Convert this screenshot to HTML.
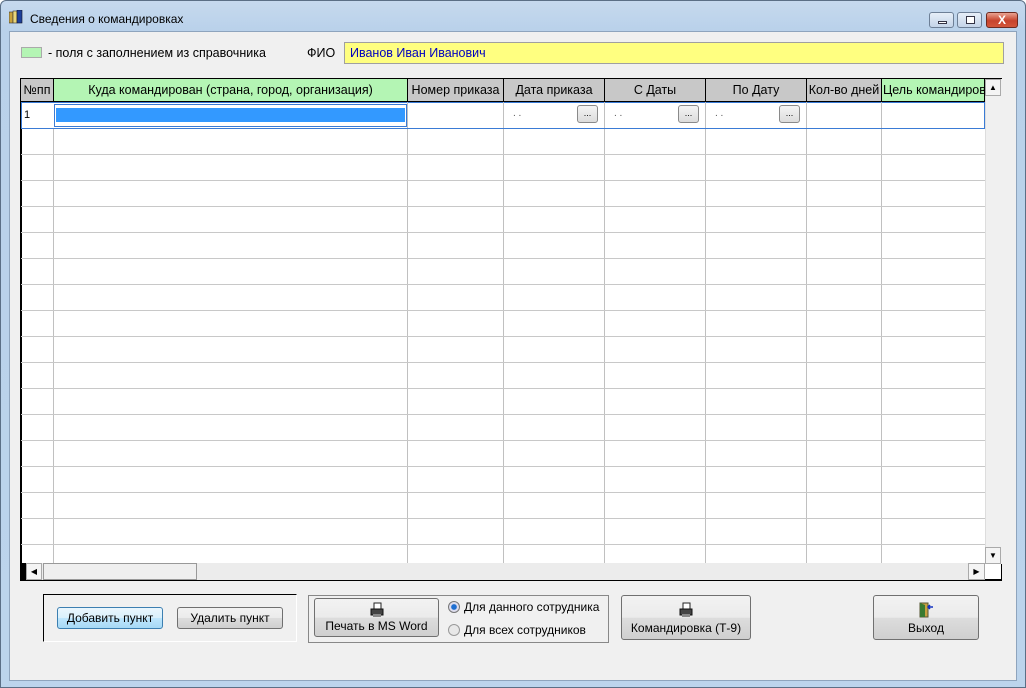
<!DOCTYPE html>
<html><head><meta charset="utf-8"><style>
*{margin:0;padding:0;box-sizing:border-box}
body{width:1026px;height:688px;overflow:hidden;background:#fff;font-family:"Liberation Sans","DejaVu Sans",sans-serif;font-size:12px;position:relative}
.a{position:absolute}
.btn{position:absolute;border:1px solid #707070;border-radius:3px;background:linear-gradient(#f2f2f2 0%,#ebebeb 50%,#dddddd 51%,#cfcfcf 100%);text-align:center;color:#000;font-size:12px}
.hd{position:absolute;top:79px;height:23px;border-right:1px solid #000;border-bottom:1px solid #000;background:#c8c8c8;text-align:center;line-height:23px;font-size:12.5px;white-space:nowrap;overflow:hidden}
.g{background:#b4f5b4}
.vl{position:absolute;top:102px;width:1px;height:461px;background:#c0c0c0}
.hl{position:absolute;left:21px;width:964px;height:1px;background:#c8c8c8}
.dd{position:absolute;top:105px;width:21px;height:18px;border:1px solid #8a8a8a;border-radius:3px;background:linear-gradient(#f4f4f4,#dcdcdc);font-size:9px;text-align:center;line-height:14px}
.dots{position:absolute;top:108px;font-size:10px;color:#555}
.ic{display:block;margin:0 auto}
</style></head><body>
<div class="a" style="left:0;top:0;width:1026px;height:688px;background:linear-gradient(#c6d9ee,#b9d1ea 30px,#bcd4ec);border:1px solid #5b6f86;border-radius:6px 6px 0 0"></div>
<div class="a" style="left:9px;top:31px;width:1008px;height:650px;background:#f0f0f0;border:1px solid #8ea4bd"></div>
<div class="a" style="left:9px;top:10px;width:14px;height:14px">
<svg width="14" height="14"><rect x="0" y="2" width="4" height="11" fill="#c9a23a" stroke="#333" stroke-width=".6"/><rect x="4" y="1" width="4" height="12" fill="#e8d57a" stroke="#333" stroke-width=".6"/><rect x="8" y="0" width="5" height="13" fill="#1d3f9a" stroke="#112" stroke-width=".6"/></svg></div>
<div class="a" style="left:30px;top:12px;font-size:12px;color:#000">Сведения о командировках</div>
<div class="a" style="left:929px;top:12px;width:25px;height:16px;border:1px solid #6d7f96;border-radius:3px;background:linear-gradient(#e6eef8,#c4d4e8)"><div class="a" style="left:8px;top:8px;width:9px;height:3px;background:#fff;border:1px solid #334"></div></div>
<div class="a" style="left:957px;top:12px;width:25px;height:16px;border:1px solid #6d7f96;border-radius:3px;background:linear-gradient(#e6eef8,#c4d4e8)"><div class="a" style="left:8px;top:3px;width:9px;height:8px;border:1px solid #334;background:#fff"></div></div>
<div class="a" style="left:986px;top:12px;width:32px;height:16px;border:1px solid #6d2a20;border-radius:3px;background:linear-gradient(#e9a392,#c7432c 55%,#d2563a);color:#fff;font-weight:bold;font-size:12px;text-align:center;line-height:14px">X</div>
<div class="a" style="left:21px;top:47px;width:21px;height:11px;background:#b4f5b4;border:1px solid #aaa"></div>
<div class="a" style="left:48px;top:46px;font-size:12.5px">- поля с заполнением из справочника</div>
<div class="a" style="left:307px;top:46px;font-size:12.5px">ФИО</div>
<div class="a" style="left:344px;top:42px;width:660px;height:22px;background:#ffff80;border:1px solid #a0a0a0;color:#0000c0;padding-left:5px;line-height:20px;font-size:12.5px">Иванов Иван Иванович</div>
<div class="a" style="left:20px;top:78px;width:982px;height:503px;background:#fff;border:2px solid #000;border-right:1px solid #000;border-top:1px solid #000"></div>
<div class="hd" style="left:21px;width:33px">№пп</div>
<div class="hd g" style="left:54px;width:354px">Куда командирован (страна, город, организация)</div>
<div class="hd" style="left:408px;width:96px">Номер приказа</div>
<div class="hd" style="left:504px;width:101px">Дата приказа</div>
<div class="hd" style="left:605px;width:101px">С Даты</div>
<div class="hd" style="left:706px;width:101px">По Дату</div>
<div class="hd" style="left:807px;width:75px">Кол-во дней</div>
<div class="hd g" style="left:882px;width:103px;text-align:left;padding-left:1px">Цель командировки</div>
<div class="vl" style="left:53px"></div><div class="vl" style="left:407px"></div><div class="vl" style="left:503px"></div><div class="vl" style="left:604px"></div><div class="vl" style="left:705px"></div><div class="vl" style="left:806px"></div><div class="vl" style="left:881px"></div>
<div class="hl" style="top:154px"></div><div class="hl" style="top:180px"></div><div class="hl" style="top:206px"></div><div class="hl" style="top:232px"></div><div class="hl" style="top:258px"></div><div class="hl" style="top:284px"></div><div class="hl" style="top:310px"></div><div class="hl" style="top:336px"></div><div class="hl" style="top:362px"></div><div class="hl" style="top:388px"></div><div class="hl" style="top:414px"></div><div class="hl" style="top:440px"></div><div class="hl" style="top:466px"></div><div class="hl" style="top:492px"></div><div class="hl" style="top:518px"></div><div class="hl" style="top:544px"></div>
<div class="a" style="left:21px;top:102px;width:964px;height:27px;border:1px solid #3a7bd5;background:#fff"></div>
<div class="vl" style="left:407px;height:26px"></div><div class="vl" style="left:503px;height:26px"></div><div class="vl" style="left:604px;height:26px"></div><div class="vl" style="left:705px;height:26px"></div><div class="vl" style="left:806px;height:26px"></div><div class="vl" style="left:881px;height:26px"></div>
<div class="a" style="left:24px;top:109px;font-size:11px">1</div>
<div class="a" style="left:54px;top:104px;width:353px;height:23px;border:1px solid #3a7bd5;background:#fff"><div class="a" style="left:1px;top:3px;width:349px;height:14px;background:#3399ff"></div></div>
<div class="dots" style="left:513px">. .</div><div class="dd" style="left:577px">...</div>
<div class="dots" style="left:614px">. .</div><div class="dd" style="left:678px">...</div>
<div class="dots" style="left:715px">. .</div><div class="dd" style="left:779px">...</div>
<div class="a" style="left:985px;top:79px;width:17px;height:485px;background:#f0f0f0;border-left:1px solid #ddd"></div>
<div class="a" style="left:985px;top:79px;width:16px;height:17px;background:#f4f4f4;border:1px solid #aaa;font-size:8px;text-align:center;line-height:15px">▲</div>
<div class="a" style="left:985px;top:547px;width:16px;height:17px;background:#f4f4f4;border:1px solid #aaa;font-size:8px;text-align:center;line-height:15px">▼</div>
<div class="a" style="left:21px;top:563px;width:964px;height:17px;background:#ececec"></div>
<div class="a" style="left:21px;top:563px;width:5px;height:17px;background:#000"></div>
<div class="a" style="left:26px;top:563px;width:16px;height:17px;background:#f4f4f4;border:1px solid #aaa;font-size:8px;text-align:center;line-height:15px">◀</div>
<div class="a" style="left:43px;top:563px;width:154px;height:17px;background:#efefef;border:1px solid #999"></div>
<div class="a" style="left:968px;top:563px;width:17px;height:17px;background:#f4f4f4;border:1px solid #aaa;font-size:8px;text-align:center;line-height:15px">▶</div>
<div class="a" style="left:43px;top:594px;width:254px;height:48px;border-top:1px solid #000;border-left:1px solid #000;border-right:1px solid #fff;border-bottom:1px solid #fff"></div>
<div class="btn" style="left:57px;top:607px;width:106px;height:22px;line-height:20px;background:linear-gradient(#eaf6fd,#d9f0fc 50%,#bee6fd 51%,#a7d9f5);border-color:#3c7fb1">Добавить пункт</div>
<div class="btn" style="left:177px;top:607px;width:106px;height:22px;line-height:20px">Удалить пункт</div>
<div class="a" style="left:308px;top:595px;width:301px;height:48px;border:1px solid #888"></div>
<div class="btn" style="left:314px;top:598px;width:125px;height:39px"><svg class="ic" width="14" height="16" style="margin-top:3px"><rect x="4" y="1" width="7" height="6" fill="#fff" stroke="#222"/><rect x="1" y="7" width="12" height="6" fill="#444" stroke="#111"/><rect x="3" y="12" width="8" height="3" fill="#888"/></svg><div style="line-height:16px">Печать в MS Word</div></div>
<div class="a" style="left:448px;top:601px;width:12px;height:12px;border-radius:50%;border:1px solid #777;background:radial-gradient(#1f6fd0 35%,#dde 45%)"></div>
<div class="a" style="left:464px;top:600px">Для данного сотрудника</div>
<div class="a" style="left:448px;top:624px;width:12px;height:12px;border-radius:50%;border:1px solid #999;background:#e8e8e8"></div>
<div class="a" style="left:464px;top:623px">Для всех сотрудников</div>
<div class="btn" style="left:621px;top:595px;width:130px;height:45px"><svg class="ic" width="14" height="16" style="margin-top:6px"><rect x="4" y="1" width="7" height="6" fill="#fff" stroke="#222"/><rect x="1" y="7" width="12" height="6" fill="#444" stroke="#111"/><rect x="3" y="12" width="8" height="3" fill="#888"/></svg><div style="line-height:20px">Командировка (Т-9)</div></div>
<div class="btn" style="left:873px;top:595px;width:106px;height:45px"><svg class="ic" width="16" height="16" style="margin-top:6px"><rect x="2" y="1" width="8" height="14" fill="#c8a040" stroke="#553"/><polygon points="2,1 7,3 7,15 2,15" fill="#3a7a30"/><path d="M15 5 L11 5 M12 3 L10 5 L12 7" stroke="#1030c0" stroke-width="1.5" fill="none"/></svg><div style="line-height:20px">Выход</div></div>
</body></html>
